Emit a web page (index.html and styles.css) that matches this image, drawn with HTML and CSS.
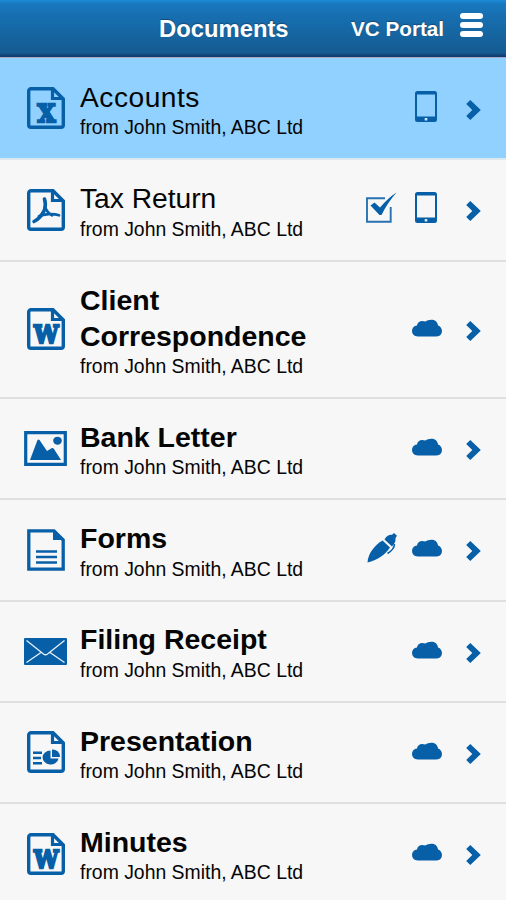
FILE: index.html
```html
<!DOCTYPE html>
<html lang="en">
<head>
    <meta charset="UTF-8">
    <meta name="viewport" content="width=device-width, initial-scale=1.0">
    <title>Documents</title>
    <link rel="stylesheet" href="styles.css">
</head>
<body>
    <!-- shared icons -->
    <svg class="sprite">
        <symbol id="page" viewBox="0 0 38 42">
            <path d="M4 1.7H26L36.3 12V38a2.3 2.3 0 0 1-2.3 2.3H4A2.3 2.3 0 0 1 1.7 38V4A2.3 2.3 0 0 1 4 1.7Z" fill="none" stroke="#075fa8" stroke-width="3.4"/>
            <path d="M25.5 2V11.5H35" fill="none" stroke="#075fa8" stroke-width="3.2"/>
        </symbol>
        <symbol id="excel" viewBox="0 0 38 42">
            <use href="#page"/>
            <text class="letter" x="10.5" y="35.3" textLength="18" lengthAdjust="spacingAndGlyphs">X</text>
        </symbol>
        <symbol id="word" viewBox="0 0 38 42">
            <use href="#page"/>
            <text class="letter" x="7" y="35" textLength="24.5" lengthAdjust="spacingAndGlyphs">W</text>
        </symbol>
        <symbol id="pdf" viewBox="0 0 38 42">
            <use href="#page"/>
            <path d="M17.5 10C18.5 13 18.5 17 17.7 20.5C15.5 25.5 12 30 7 32.5" fill="none" stroke="#075fa8" stroke-width="3.6" stroke-linecap="round"/>
            <path d="M18 18C19.5 22 21.5 24.5 25 26.3M12 27.3C17 25 26 24.3 32 26.3" fill="none" stroke="#075fa8" stroke-width="2.7" stroke-linecap="round"/>
        </symbol>
        <symbol id="slides" viewBox="0 0 38 42">
            <use href="#page"/>
            <path d="M6 21.7h9M6 27h8M6 32.3h9" stroke="#075fa8" stroke-width="2.5"/>
            <path d="M23.5 19.5V27.5H31.5A8 7 0 1 1 23.5 19.5Z" fill="#075fa8"/>
            <path d="M25 18.5A7.5 7 0 0 1 33 26H25Z" fill="#075fa8"/>
        </symbol>
        <symbol id="form" viewBox="0 0 38 42">
            <path d="M1.8 1.8H27L36.2 11V40.2H1.8Z" fill="none" stroke="#075fa8" stroke-width="3.3"/>
            <path d="M26 1V11H37Z" fill="#075fa8"/>
            <path d="M9 22.5H30M9 28H30M9 33.5H30" stroke="#075fa8" stroke-width="2.3"/>
        </symbol>
        <symbol id="image" viewBox="0 0 43 35">
            <path d="M1.7 1.7H41.3V33.3H1.7Z" fill="none" stroke="#075fa8" stroke-width="3.2"/>
            <path d="M6 29L13.5 9Q14.5 8 15.5 9L23 20L28 17Q29 16.5 30 18L37 29Z" fill="#075fa8"/>
            <ellipse cx="33.5" cy="9.7" rx="4.3" ry="4" fill="#075fa8"/>
        </symbol>
        <symbol id="mail" viewBox="0 0 43 27">
            <rect width="43" height="27" rx="1" fill="#075fa8"/>
            <path d="M2.5 2.5L19.5 16Q21.5 17.5 23.5 16L40.5 2.5M2.5 24.5L17 14.5M40.5 24.5L26 14.5" fill="none" stroke="#e8f1f8" stroke-width="1.3"/>
        </symbol>
        <symbol id="tablet" viewBox="0 0 22 31">
            <path fill-rule="evenodd" d="M2.5 0H19.5A2.5 2.5 0 0 1 22 2.5V28.5A2.5 2.5 0 0 1 19.5 31H2.5A2.5 2.5 0 0 1 0 28.5V2.5A2.5 2.5 0 0 1 2.5 0ZM2 3.5V25.5H20V3.5Z" fill="#075fa8"/>
            <rect x="9.7" y="27" width="2.6" height="2.5" rx=".6" fill="#dcebf6"/>
        </symbol>
        <symbol id="cloud" viewBox="0 0 30 18">
            <path d="M6 17.5C-2 17.5-1.500 7 5 6.500C5.500 2.500 9 1 13.500 2.500C17-.3 25.500-.5 26 6.500C31.500 8 31.500 17.500 24.500 17.500Z" fill="#075fa8"/>
        </symbol>
        <symbol id="check" viewBox="0 0 31 31">
            <path d="M19 6.3H1V29.8H24.7V15" fill="none" stroke="#2872b1" stroke-width="1.9"/>
            <path d="M4.5 13.5L8.5 10.5L14 15.5Q22 6 30.5 .5Q22 10 15.5 23H13.5Z" fill="#075fa8"/>
        </symbol>
        <symbol id="pen" viewBox="0 0 30 30">
            <path d="M.5 29.5C1 20 8 12 15.5 7.5L23 14.5C18 22 10 27.5 .5 29.5Z" fill="#075fa8"/>
            <path d="M17.5 6.5C19 3.500 22 1.500 25 1.800L27 0L30 2.800L28.500 5C29 8 27.500 11 25 13.500Z" fill="#075fa8"/>
            <path d="M27.5 11C27.5 15 24.5 18 20.5 20.5" fill="none" stroke="#075fa8" stroke-width="1.5"/>
        </symbol>
        <symbol id="arrow" viewBox="0 0 15 20">
            <path d="M4.3 0L14.8 10L4.3 20L.2 16L6.3 10L.2 4Z" fill="#075fa8"/>
        </symbol>
    </svg>

    <header class="header">
        <h1 class="title">Documents</h1>
        <span class="portal">VC Portal</span>
        <div class="menu"><span></span><span></span><span></span></div>
    </header>

    <main class="list">
        <div class="row selected">
            <div class="type"><svg class="doc"><use href="#excel"/></svg></div>
            <div class="info">
                <h2 class="name read accounts">Accounts</h2>
                <p class="from">from John Smith, ABC Ltd</p>
            </div>
            <div class="status"><svg class="tablet"><use href="#tablet"/></svg></div>
            <svg class="arrow"><use href="#arrow"/></svg>
        </div>
        <div class="row">
            <div class="type"><svg class="doc"><use href="#pdf"/></svg></div>
            <div class="info">
                <h2 class="name read">Tax Return</h2>
                <p class="from">from John Smith, ABC Ltd</p>
            </div>
            <div class="status">
                <svg class="check"><use href="#check"/></svg>
                <svg class="tablet"><use href="#tablet"/></svg>
            </div>
            <svg class="arrow"><use href="#arrow"/></svg>
        </div>
        <div class="row">
            <div class="type"><svg class="doc"><use href="#word"/></svg></div>
            <div class="info">
                <h2 class="name">Client<br>Correspondence</h2>
                <p class="from">from John Smith, ABC Ltd</p>
            </div>
            <div class="status"><svg class="cloud"><use href="#cloud"/></svg></div>
            <svg class="arrow"><use href="#arrow"/></svg>
        </div>
        <div class="row">
            <div class="type"><svg class="image"><use href="#image"/></svg></div>
            <div class="info">
                <h2 class="name">Bank Letter</h2>
                <p class="from">from John Smith, ABC Ltd</p>
            </div>
            <div class="status"><svg class="cloud"><use href="#cloud"/></svg></div>
            <svg class="arrow"><use href="#arrow"/></svg>
        </div>
        <div class="row">
            <div class="type"><svg class="doc"><use href="#form"/></svg></div>
            <div class="info">
                <h2 class="name">Forms</h2>
                <p class="from">from John Smith, ABC Ltd</p>
            </div>
            <div class="status">
                <svg class="pen"><use href="#pen"/></svg>
                <svg class="cloud"><use href="#cloud"/></svg>
            </div>
            <svg class="arrow"><use href="#arrow"/></svg>
        </div>
        <div class="row">
            <div class="type"><svg class="mail"><use href="#mail"/></svg></div>
            <div class="info">
                <h2 class="name">Filing Receipt</h2>
                <p class="from">from John Smith, ABC Ltd</p>
            </div>
            <div class="status"><svg class="cloud"><use href="#cloud"/></svg></div>
            <svg class="arrow"><use href="#arrow"/></svg>
        </div>
        <div class="row">
            <div class="type"><svg class="doc"><use href="#slides"/></svg></div>
            <div class="info">
                <h2 class="name">Presentation</h2>
                <p class="from">from John Smith, ABC Ltd</p>
            </div>
            <div class="status"><svg class="cloud"><use href="#cloud"/></svg></div>
            <svg class="arrow"><use href="#arrow"/></svg>
        </div>
        <div class="row">
            <div class="type"><svg class="doc"><use href="#word"/></svg></div>
            <div class="info">
                <h2 class="name">Minutes</h2>
                <p class="from">from John Smith, ABC Ltd</p>
            </div>
            <div class="status"><svg class="cloud"><use href="#cloud"/></svg></div>
            <svg class="arrow"><use href="#arrow"/></svg>
        </div>
    </main>
</body>
</html>
```
FILE: styles.css
```css
* {
    box-sizing: border-box;
}
body {
    margin: 0;
    height: 900px;
    overflow: hidden;
    background: #f7f7f7;
    color: #050505;
    font-family: "Liberation Sans", Arial, sans-serif;
}
.sprite {
    display: none;
}
.header {
    display: grid;
    grid-template-columns: 192px 109px 23px;
    align-items: center;
    height: 58px;
    padding-left: 159px;
    background: linear-gradient(#1b8ad8 0, #1879bf 4px, #1770b2 14px, #145b91 53px, #123c70 56px);
    border-bottom: 1px solid #a5a9c4;
    color: #fff;
}
.title, .portal {
    margin: 0;
    font-weight: bold;
    white-space: nowrap;
    line-height: 28px;
    text-shadow: 0 -1px 1px #174a76;
}
.title {
    font-size: 23.8px;
}
.portal {
    font-size: 20.7px;
}
.menu {
    display: flex;
    flex-direction: column;
    gap: 3px;
    padding-bottom: 8px;
}
.menu span {
    height: 6px;
    border-radius: 3px;
    background: #fff;
}
.row {
    display: grid;
    grid-template-columns: 43px 240px 135px 15px;
    align-items: center;
    height: 101.25px;
    padding-left: 24px;
    border-bottom: 2px solid #e0e0e0;
}
.row:nth-child(3) {
    height: 137.5px;
}
.row.selected {
    height: 102.25px;
    background: #90d1ff;
    border-bottom-color: #dfe9ef;
}
.type {
    display: flex;
    justify-content: center;
}
.info {
    padding: 1px 0 0 13px;
}
.selected .info {
    padding-top: 2px;
}
.name {
    margin: 0;
    font-size: 28.5px;
    font-weight: bold;
    line-height: 36px;
}
.read {
    font-weight: normal;
    font-size: 28.2px;
}
.accounts {
    letter-spacing: .5px;
}
.from {
    margin: 0;
    padding-top: .5px;
    font-size: 19.4px;
    line-height: 24px;
    white-space: nowrap;
}
.status {
    display: flex;
    justify-content: flex-end;
    align-items: center;
    height: 31px;
    margin-bottom: 4px;
}
.doc {
    width: 38px;
    height: 42px;
}
.image {
    width: 43px;
    height: 35px;
}
.mail {
    width: 43px;
    height: 27px;
}
.tablet {
    width: 22px;
    height: 31px;
    margin-right: 5px;
}
.cloud {
    width: 30px;
    height: 18px;
    margin-top: 1px;
}
.check {
    width: 31px;
    height: 31px;
    margin-right: 18px;
}
.pen {
    width: 30px;
    height: 30px;
    margin-right: 15px;
}
.arrow {
    width: 15px;
    height: 20px;
    margin: 3px 0 0 24px;
}
.letter {
    font-family: "DejaVu Serif", serif;
    font-size: 25px;
    font-weight: bold;
    fill: #075fa8;
    stroke: #075fa8;
    stroke-width: 2.4px;
}
```
